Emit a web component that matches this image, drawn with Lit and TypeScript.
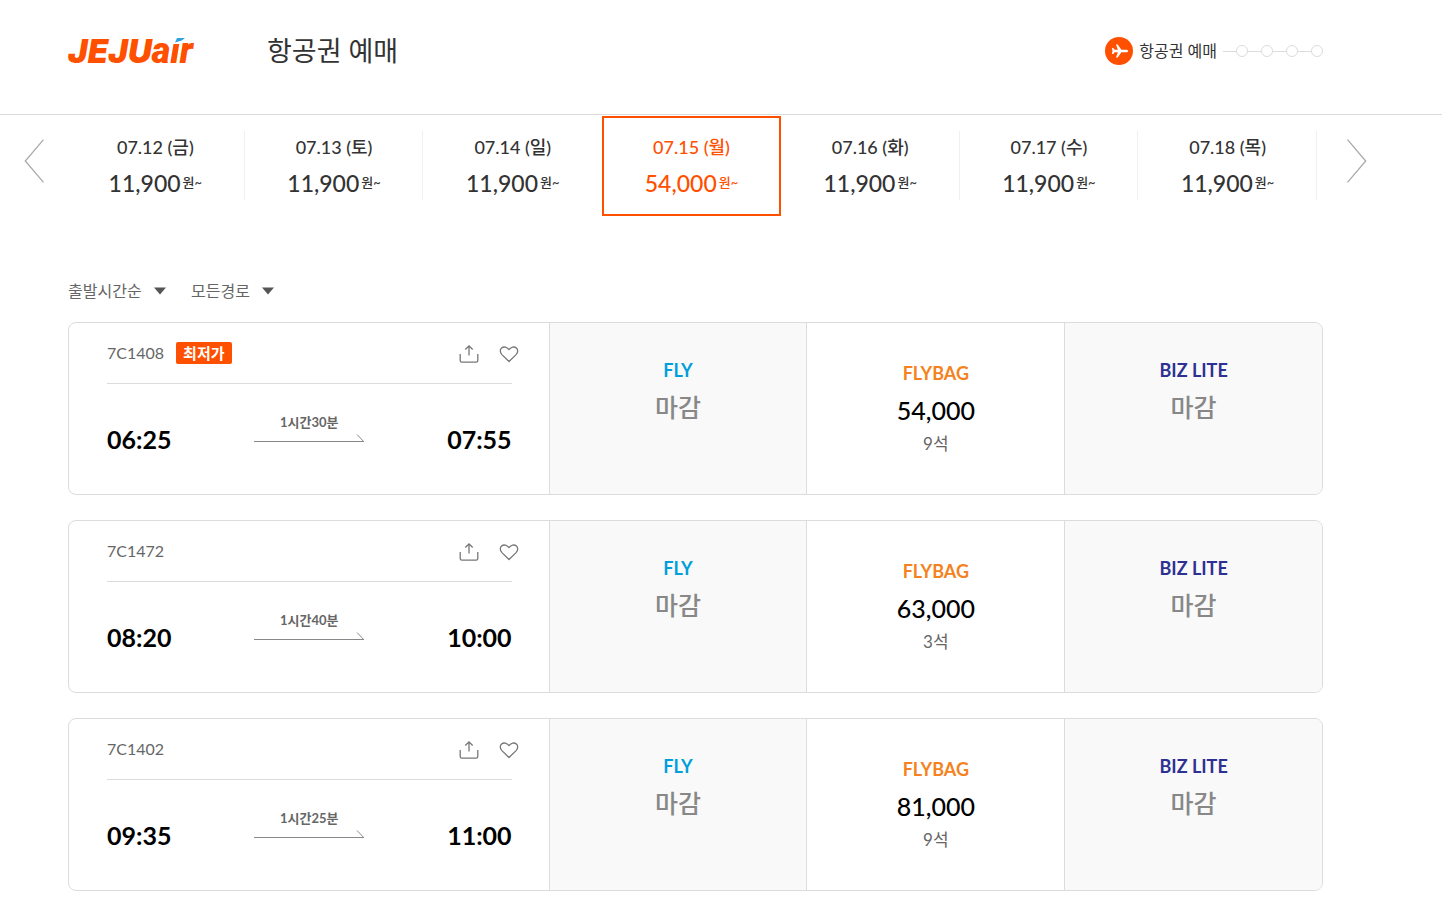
import { LitElement, html, css, svg, nothing } from "lit";
import { customElement, property, state } from "lit/decorators.js";
import { classMap } from "lit/directives/class-map.js";

interface DayFare {
  date: string;
  price: string;
}

interface Fare {
  name: string;
  tone: "fly" | "flybag" | "biz";
  price?: string;
  seats?: string;
}

interface Flight {
  no: string;
  lowest: boolean;
  depart: string;
  arrive: string;
  duration: string;
  fares: Fare[];
}

const DAYS: DayFare[] = [
  { date: "07.12 (금)", price: "11,900" },
  { date: "07.13 (토)", price: "11,900" },
  { date: "07.14 (일)", price: "11,900" },
  { date: "07.15 (월)", price: "54,000" },
  { date: "07.16 (화)", price: "11,900" },
  { date: "07.17 (수)", price: "11,900" },
  { date: "07.18 (목)", price: "11,900" },
];

const fares = (price: string, seats: string): Fare[] => [
  { name: "FLY", tone: "fly" },
  { name: "FLYBAG", tone: "flybag", price, seats },
  { name: "BIZ LITE", tone: "biz" },
];

const FLIGHTS: Flight[] = [
  { no: "7C1408", lowest: true, depart: "06:25", arrive: "07:55", duration: "1시간30분", fares: fares("54,000", "9석") },
  { no: "7C1472", lowest: false, depart: "08:20", arrive: "10:00", duration: "1시간40분", fares: fares("63,000", "3석") },
  { no: "7C1402", lowest: false, depart: "09:35", arrive: "11:00", duration: "1시간25분", fares: fares("81,000", "9석") },
];

const base = css`
  *,
  *::before,
  *::after {
    box-sizing: border-box;
  }
  button {
    margin: 0;
    padding: 0;
    border: 0;
    background: none;
    color: inherit;
    font: inherit;
    cursor: pointer;
  }
  svg {
    display: block;
  }
`;

@customElement("booking-header")
export class BookingHeader extends LitElement {
  static styles = [
    base,
    css`
      :host {
        display: block;
        border-bottom: 1px solid #dcdcdc;
      }
      .bar {
        display: flex;
        align-items: center;
        margin-right: 51px;
        padding: 31px 68px 43px;
      }
      .logo {
        position: relative;
        width: 128px;
        margin-right: 71px;
        color: #ff5000;
        font: italic 900 33px/40px Inter, "Open Sans", sans-serif;
        text-decoration: none;
        white-space: nowrap;
      }
      .air {
        font-family: Roboto, sans-serif;
        font-size: 36px;
        line-height: 32px;
      }
      .stem {
        margin-right: -3px;
        padding-right: 3px;
        background: linear-gradient(transparent 14px, #ff5000 14px);
        -webkit-background-clip: text;
        background-clip: text;
        color: transparent;
      }
      .accent {
        position: absolute;
        top: 7px;
        right: 11px;
      }
      h1 {
        margin: 0;
        color: #333;
        font-size: 27px;
        font-weight: 400;
        line-height: 40px;
      }
      .progress {
        display: flex;
        align-items: center;
        gap: 6px;
        margin-left: auto;
        color: #333;
        font-size: 16px;
        line-height: 24px;
      }
      .steps {
        display: flex;
        margin: 0;
        padding: 0;
        list-style: none;
      }
      .steps li {
        display: flex;
        align-items: center;
      }
      .steps li::before {
        content: "";
        width: 13px;
        height: 1px;
        background: #dcdcdc;
      }
      .steps li::after {
        content: "";
        width: 12px;
        height: 12px;
        border: 1px solid #dcdcdc;
        border-radius: 50%;
      }
    `,
  ];

  render() {
    return html`
      <header class="bar">
        <a class="logo" href="#">JEJU<span class="air">a<span class="stem">i</span>r</span><svg
            class="accent" width="10" height="5" viewBox="0 0 10 5" aria-hidden="true">
            <path d="M2 0h8L6.800 2.400 0 4.400z" fill="#2ea3dc" />
          </svg></a>
        <h1>항공권 예매</h1>
        <div class="progress">
          <svg width="28" height="28" viewBox="0 0 28 28" aria-hidden="true">
            <circle cx="14" cy="14" r="14" fill="#ff5000" />
            <path
              fill="#fff"
              d="M23.200 14c0 .8-1.200 1.300-2.600 1.300h-4.200l-3.700 5.200h-1.700l1.900-5.200H9.700l-1.500 1.800H6.900L7.500 14l-.6-3.100h1.300l1.500 1.800h3.200l-1.900-5.200h1.700l3.700 5.200h4.200c1.400 0 2.600.5 2.600 1.300z"
            />
          </svg>
          <span>항공권 예매</span>
          <ol class="steps"><li></li><li></li><li></li><li></li></ol>
        </div>
      </header>
    `;
  }
}

@customElement("date-strip")
export class DateStrip extends LitElement {
  @state() private selected = 3;

  static styles = [
    base,
    css`
      :host {
        display: block;
      }
      .strip {
        display: grid;
        grid-template-columns: 66px 1fr 74px;
        margin-right: 51px;
        padding-top: 1px;
      }
      .nav {
        display: flex;
        align-items: center;
        padding: 0 0 10px 24px;
      }
      .next {
        padding-left: 30px;
      }
      .days {
        display: grid;
        grid-template-columns: repeat(7, 1fr);
        margin: 0;
        padding: 0;
        list-style: none;
      }
      .day {
        display: flex;
        flex-direction: column;
        align-items: center;
        width: 100%;
        height: 100px;
        padding-top: 17px;
        border: 2px solid transparent;
        background: linear-gradient(#f0f0f0, #f0f0f0) right 15px / 1px 69px no-repeat border-box;
        color: #333;
        font-weight: 500;
      }
      .day.quiet {
        background: none;
      }
      .day.on {
        border-color: #ff5000;
        background: none;
        color: #ff5000;
      }
      .date {
        font-size: 18px;
        line-height: 24px;
      }
      .price {
        display: flex;
        align-items: center;
        gap: 2px;
        margin-top: 8px;
        font-size: 23px;
        line-height: 32px;
      }
      .unit {
        padding-bottom: 2px;
        font-size: 13px;
        line-height: 28px;
      }
    `,
  ];

  render() {
    return html`
      <nav class="strip" aria-label="날짜">
        <button class="nav" aria-label="이전">
          <svg width="20" height="44" viewBox="0 0 20 44" fill="none" stroke="#aaa" stroke-width="1.300">
            <path d="M19.500 .7 1.300 22l18.200 21.300" />
          </svg>
        </button>
        <ul class="days">
          ${DAYS.map(
            (d, i) => html`<li>
              <button
                class=${classMap({ day: true, on: i === this.selected, quiet: i === this.selected - 1 })}
                @click=${() => (this.selected = i)}
              >
                <span class="date">${d.date}</span>
                <span class="price">${d.price}<span class="unit">원~</span></span>
              </button>
            </li>`
          )}
        </ul>
        <button class="nav next" aria-label="다음">
          <svg width="20" height="44" viewBox="0 0 20 44" fill="none" stroke="#aaa" stroke-width="1.300">
            <path d="M.5 .7 18.700 22 .5 43.300" />
          </svg>
        </button>
      </nav>
    `;
  }
}

@customElement("flight-card")
export class FlightCard extends LitElement {
  @property({ attribute: false }) flight!: Flight;

  static styles = [
    base,
    css`
      :host {
        display: block;
      }
      .card {
        display: grid;
        grid-template-columns: 480fr 258fr 258fr 258fr;
        border: 1px solid #dcdcdc;
        border-radius: 8px;
        overflow: hidden;
      }
      .info {
        padding: 0 37px 0 38px;
      }
      .top {
        display: flex;
        align-items: center;
        height: 61px;
        border-bottom: 1px solid #dcdcdc;
      }
      .no {
        color: #666;
        font-size: 16px;
        line-height: 24px;
      }
      .badge {
        margin-left: 12px;
        padding: 0 7px;
        border-radius: 2px;
        background: #ff5000;
        color: #fff;
        font-size: 15px;
        font-weight: 700;
        line-height: 22px;
      }
      .tools {
        display: flex;
        gap: 20px;
        margin: 2px -7px 0 auto;
      }
      .route {
        display: flex;
        align-items: center;
        justify-content: space-between;
        height: 110px;
      }
      .time {
        color: #000;
        font-size: 25px;
        font-weight: 700;
        line-height: 32px;
      }
      .leg {
        display: flex;
        flex-direction: column;
        align-items: center;
        padding-bottom: 24px;
        color: #666;
        font-size: 13px;
        font-weight: 700;
        line-height: 20px;
      }
      .fare {
        display: flex;
        flex-direction: column;
        align-items: center;
        padding-top: 37px;
        border-left: 1px solid #dcdcdc;
      }
      .fare:disabled {
        padding-top: 34px;
        background: #f9f9f9;
        cursor: default;
      }
      .name {
        font-size: 18px;
        font-weight: 700;
        line-height: 26px;
      }
      .fly {
        color: #009fda;
      }
      .flybag {
        color: #f58220;
      }
      .biz {
        color: #2e3192;
      }
      .amount {
        margin-top: 7px;
        color: #000;
        font-size: 25px;
        font-weight: 500;
        line-height: 34px;
      }
      .closed {
        color: #888;
      }
      .seats {
        margin-top: 5px;
        color: #666;
        font-size: 17px;
        line-height: 24px;
      }
    `,
  ];

  render() {
    const f = this.flight;
    return html`
      <article class="card">
        <div class="info">
          <div class="top">
            <span class="no">${f.no}</span>
            ${f.lowest ? html`<span class="badge">최저가</span>` : nothing}
            <div class="tools">
              <button aria-label="공유">
                <svg width="20" height="20" viewBox="0 0 20 20" fill="none" stroke="#777" stroke-width="1.300">
                  <path d="M1.200 10v6.500c0 1 .6 1.700 1.700 1.700h14.200c1.100 0 1.700-.7 1.700-1.700V10M10 11.500V2M6.300 5.500 10 1.800l3.700 3.700" />
                </svg>
              </button>
              <button aria-label="찜">
                <svg width="20" height="20" viewBox="0 0 20 20" fill="none" stroke="#777" stroke-width="1.300" stroke-linejoin="round">
                  <path d="M10 17.500 2.900 10.600C.7 8.300.9 5.600 2.600 4.100c2.100-1.900 5.300-1.300 7.400 1.500 2.100-2.800 5.300-3.400 7.400-1.500 1.700 1.500 1.900 4.200-.3 6.500z" />
                </svg>
              </button>
            </div>
          </div>
          <div class="route">
            <span class="time">${f.depart}</span>
            <div class="leg">
              <span>${f.duration}</span>
              <svg width="110" height="10" viewBox="0 0 110 10" fill="none" stroke="#888">
                <path d="M0 9.500h110M103 2.500l6.500 6.800" />
              </svg>
            </div>
            <span class="time">${f.arrive}</span>
          </div>
        </div>
        ${f.fares.map(
          (x) => html`<button class="fare" ?disabled=${!x.price}>
            <span class="name ${x.tone}">${x.name}</span>
            <span class=${classMap({ amount: true, closed: !x.price })}>${x.price ?? "마감"}</span>
            ${x.seats ? html`<span class="seats">${x.seats}</span>` : nothing}
          </button>`
        )}
      </article>
    `;
  }
}

@customElement("app-root")
export class AppRoot extends LitElement {
  static styles = [
    base,
    css`
      :host {
        display: block;
        min-height: 100vh;
        background: #fff;
        font-family: Lato, "Noto Sans CJK KR", sans-serif;
      }
      .results {
        margin-right: 51px;
        padding: 63px 68px 9px;
      }
      .filters {
        display: flex;
        gap: 25px;
        margin-bottom: 19px;
      }
      .filter {
        display: grid;
        align-items: center;
      }
      .filter > * {
        grid-area: 1 / 1;
      }
      .filter svg {
        justify-self: end;
        pointer-events: none;
      }
      select {
        height: 24px;
        margin: 0;
        padding: 0 24px 0 0;
        border: 0;
        appearance: none;
        background: none;
        color: #666;
        font: 400 16px/24px Lato, "Noto Sans CJK KR", sans-serif;
      }
      .list {
        display: grid;
        gap: 25px;
      }
    `,
  ];

  private filter(label: string, value: string) {
    return html`<div class="filter">
      <select aria-label=${label}>
        <option>${value}</option>
      </select>
      <svg width="12" height="8" viewBox="0 0 12 8" aria-hidden="true">${svg`<path d="M0 .5h12L6 7.500z" fill="#555" />`}</svg>
    </div>`;
  }

  render() {
    return html`
      <booking-header></booking-header>
      <date-strip></date-strip>
      <main class="results">
        <div class="filters">${this.filter("정렬", "출발시간순")}${this.filter("경로", "모든경로")}</div>
        <div class="list">${FLIGHTS.map((f) => html`<flight-card .flight=${f}></flight-card>`)}</div>
      </main>
    `;
  }
}
